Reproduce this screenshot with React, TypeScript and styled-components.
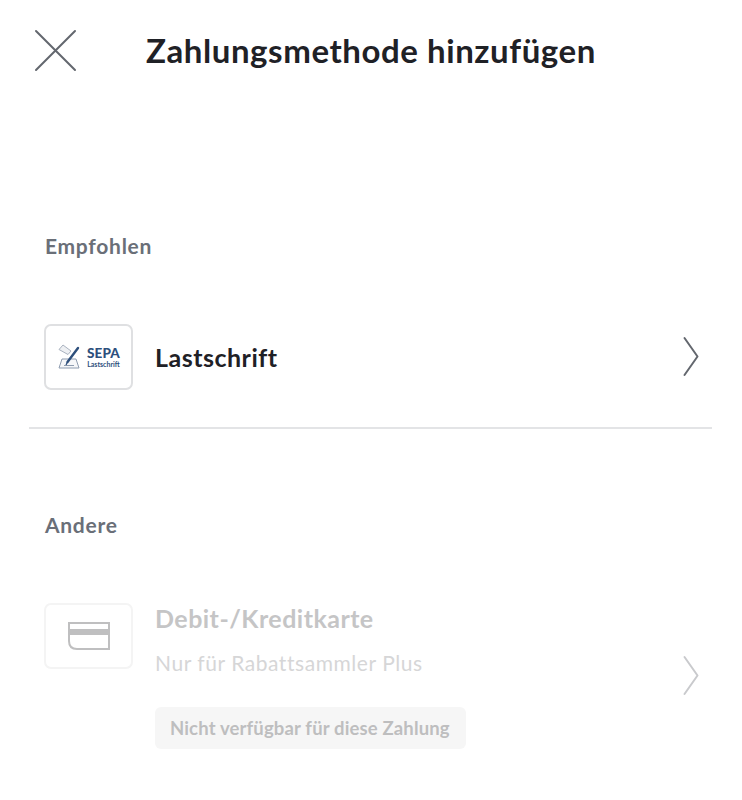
import React from 'react';
import styled, { createGlobalStyle } from 'styled-components';

const GlobalStyle = createGlobalStyle`
	html, body {
		margin: 0;
		padding: 0;
		background: #fff;
		font-family: Lato, 'Noto Sans', sans-serif;
	}
`;

const Screen = styled.div`
	width: 742px;
	height: 800px;
	overflow: hidden;
	background: #fff;
	display: flex;
	flex-direction: column;
`;

const TopBar = styled.header`
	display: flex;
	align-items: center;
	height: 44px;
	margin-top: 29px;
	padding-left: 34px;
`;

const CloseButton = styled.div`
	display: flex;
	width: 44px;
	height: 44px;
`;

const Title = styled.h1`
	margin: -2px 0 0 68px;
	font-size: 33px;
	line-height: 44px;
	font-weight: 700;
	letter-spacing: 0.57px;
	color: #1f2126;
	white-space: nowrap;
`;

const SectionLabel = styled.h2<{ $top: number }>`
	margin: ${(p) => p.$top}px 0 0 45px;
	font-size: 21px;
	line-height: 28px;
	font-weight: 700;
	letter-spacing: 0.72px;
	color: #6a6f78;
`;

const MethodRow = styled.div`
	display: flex;
	align-items: center;
	height: 68px;
	margin-top: 63px;
	padding: 0 43px 0 44px;
`;

const LogoBox = styled.div<{ $disabled?: boolean }>`
	flex: none;
	width: 89px;
	height: 66px;
	box-sizing: border-box;
	border: 2px solid ${(p) => (p.$disabled ? '#f4f4f4' : '#dfe0e2')};
	border-radius: 7px;
	display: flex;
	align-items: center;
	justify-content: center;
`;

const SepaMark = styled.div`
	display: flex;
	align-items: center;
	gap: 5px;
	margin-left: 1px;
`;

const SepaText = styled.div`
	display: flex;
	flex-direction: column;
	align-items: center;
	color: #2d4f7c;
	font-weight: 900;
`;

const SepaName = styled.span`
	font-size: 13.5px;
	line-height: 14px;
	letter-spacing: 0.1px;
`;

const SepaSub = styled.span`
	font-size: 7px;
	line-height: 9px;
	font-weight: 700;
`;

const MethodName = styled.div`
	flex: 1;
	margin-left: 22px;
	font-size: 25px;
	line-height: 32px;
	font-weight: 700;
	letter-spacing: 0.5px;
	color: #1f2126;
`;

const Divider = styled.hr`
	height: 2px;
	margin: 36px 30px 0 29px;
	border: 0;
	background: #e3e4e6;
`;

const DisabledRow = styled.div`
	display: flex;
	margin-top: 64px;
	padding: 0 43px 0 44px;
`;

const DisabledBody = styled.div`
	flex: 1;
	margin-left: 22px;
	display: flex;
	flex-direction: column;
	align-items: flex-start;
`;

const DisabledName = styled.div`
	margin-top: -1px;
	font-size: 25px;
	line-height: 32px;
	font-weight: 700;
	letter-spacing: 0.47px;
	color: #c5c5c6;
`;

const DisabledNote = styled.div`
	margin-top: 15px;
	font-size: 21px;
	line-height: 28px;
	letter-spacing: 0.55px;
	color: #d6d6d7;
`;

const Badge = styled.div`
	margin-top: 30px;
	height: 42px;
	width: 311px;
	box-sizing: border-box;
	padding-left: 15px;
	border-radius: 6px;
	background: #f6f6f6;
	color: #bebebf;
	font-size: 18.5px;
	line-height: 42px;
	font-weight: 700;
	letter-spacing: 0.15px;
	white-space: nowrap;
`;

const Chevron = styled.svg<{ $offset: number }>`
	flex: none;
	width: 16px;
	height: 42px;
	margin-top: ${(p) => p.$offset}px;
`;

const CloseIcon = () => (
	<svg width='44' height='44' viewBox='0 0 44 44' fill='none' stroke='#63676e' strokeWidth='2' strokeLinecap='round'>
		<path d='M2 2 L41 41 M41 2 L2 41' />
	</svg>
);

const ChevronIcon = ({ color, offset = 0 }: { color: string; offset?: number }) => (
	<Chevron $offset={offset} viewBox='0 0 16 42' fill='none' stroke={color} strokeWidth='2' strokeLinecap='round' strokeLinejoin='round'>
		<path d='M1.5 2 L14.5 20.5 L1.5 39' />
	</Chevron>
);

const SepaIcon = () => (
	<svg width='24' height='26' viewBox='0 0 24 26' fill='none'>
		<path d='M1 5.5 L5 1 L13 7 L10 10.5 Z' stroke='#a9b2bf' strokeWidth='1' fill='#eef0f3' />
		<path d='M4 15 L1 24 H21 L18 15 Z' stroke='#8e9cb0' strokeWidth='1' fill='#f6f7f9' />
		<path d='M6 21.5 H16' stroke='#8e9cb0' strokeWidth='1' />
		<path d='M20 4 L9.5 18' stroke='#2d4f7c' strokeWidth='2.4' strokeLinecap='round' />
		<path d='M9.5 18 L8 21' stroke='#2d4f7c' strokeWidth='1.2' />
	</svg>
);

const CardIcon = () => (
	<svg width='42' height='28' viewBox='0 0 42 28' fill='none'>
		<path d='M1 1 H41 V27 H9 Q1 27 1 19 Z' stroke='#bfbfc0' strokeWidth='2' />
		<rect x='1' y='7' width='40' height='6' fill='#bfbfc0' />
	</svg>
);

const App = () => {
	return (
		<Screen>
			<GlobalStyle />
			<TopBar>
				<CloseButton>
					<CloseIcon />
				</CloseButton>
				<Title>Zahlungsmethode hinzufügen</Title>
			</TopBar>

			<SectionLabel $top={159}>Empfohlen</SectionLabel>
			<MethodRow>
				<LogoBox>
					<SepaMark>
						<SepaIcon />
						<SepaText>
							<SepaName>SEPA</SepaName>
							<SepaSub>Lastschrift</SepaSub>
						</SepaText>
					</SepaMark>
				</LogoBox>
				<MethodName>Lastschrift</MethodName>
				<ChevronIcon color='#63676e' />
			</MethodRow>
			<Divider />

			<SectionLabel $top={82}>Andere</SectionLabel>
			<DisabledRow>
				<LogoBox $disabled>
					<CardIcon />
				</LogoBox>
				<DisabledBody>
					<DisabledName>Debit-/Kreditkarte</DisabledName>
					<DisabledNote>Nur für Rabattsammler Plus</DisabledNote>
					<Badge>Nicht verfügbar für diese Zahlung</Badge>
				</DisabledBody>
				<ChevronIcon color='#c9cacd' offset={52} />
			</DisabledRow>
		</Screen>
	);
};

export default App;
